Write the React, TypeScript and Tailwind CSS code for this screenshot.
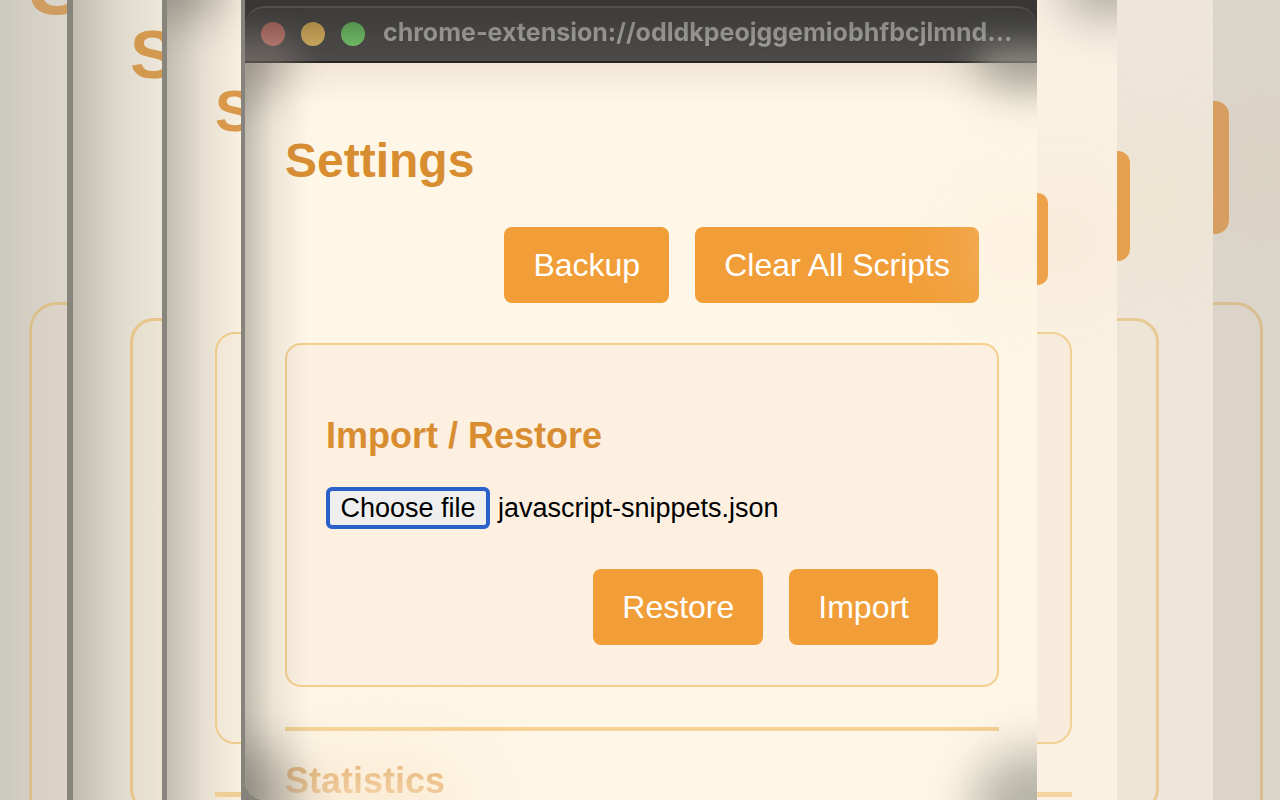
import type { ReactNode } from 'react';

function Glow({ className }: { className: string }) {
  return <div aria-hidden="true" className={`pointer-events-none absolute ${className}`} />;
}

function ActionButton({ children }: { children: ReactNode }) {
  return (
    <button
      type="button"
      className="h-[76px] rounded-lg bg-[#f19e38] px-[29px] text-[32px] leading-9 whitespace-nowrap text-white"
    >
      {children}
    </button>
  );
}

/* Slices of the larger windows that fan out behind the front one. */
function LeftEdges() {
  return (
    <>
      <div
        aria-hidden="true"
        className="relative w-[67px] shrink-0 overflow-hidden bg-linear-to-r from-[#cbc8bd] via-[#d6d1c6] to-[#dbd6cb]"
      >
        <span className="absolute -top-14 left-[29px] text-[83px] leading-none font-bold text-[#cf9d5f]">S</span>
        <div className="absolute top-[302px] left-[29px] h-[600px] w-[200px] rounded-[28px] border-[3px] border-[#dcc08c] bg-[#dfd0c1]/25" />
      </div>
      <div
        aria-hidden="true"
        className="relative w-[95px] shrink-0 overflow-hidden border-l-6 border-[#87857c] bg-linear-to-r from-[#bfbaae] via-[#dfd9cd] via-50% to-[#ede7da]"
      >
        <span className="absolute top-[20px] left-[57px] text-[69px] leading-none font-bold text-[#d3994f]">S</span>
        <div className="absolute top-[318px] left-[57px] h-[495px] w-[200px] rounded-3xl border-[3px] border-[#e7c58a] bg-[#e9dfc9]/35" />
      </div>
      <div
        aria-hidden="true"
        className="relative w-[79px] shrink-0 overflow-hidden border-l-5 border-[#87857c] bg-linear-to-r from-[#c2beb1] via-[#e7dfd1] via-50% to-[#f8f0e0]"
      >
        <Glow className="-top-12 -left-10 h-16 w-24 rounded-full bg-[#77736b]/70 blur-xl" />
        <span className="absolute top-[82px] left-12 text-[58px] leading-none font-bold text-[#d9984a]">S</span>
        <div className="absolute top-[332px] left-12 h-[412px] w-[200px] rounded-[20px] border-2 border-[#efcb8b] bg-[#f6ead9]/50" />
        <div className="absolute top-[792px] left-12 h-[5px] w-[200px] bg-[#efcf97]" />
      </div>
    </>
  );
}

function RightEdges() {
  return (
    <>
      <div aria-hidden="true" className="relative w-20 shrink-0 overflow-hidden bg-[#faf1e3]">
        <Glow className="-top-12 -right-10 h-16 w-24 rounded-full bg-[#8c897f]/70 blur-xl" />
        <Glow className="top-44 -left-3 h-32 w-20 rounded-full bg-[#f8e5cf]/60 blur-2xl" />
        <div className="absolute top-[193px] right-[69px] h-[92px] w-[200px] rounded-[10px] bg-[#eea34b]" />
        <div className="absolute top-[332px] right-[45px] h-[412px] w-[200px] rounded-[20px] border-2 border-[#f2cf92] bg-[#f7ecdc]" />
        <div className="absolute top-[792px] right-[45px] h-[5px] w-[200px] bg-[#f3d6a0]" />
      </div>
      <div aria-hidden="true" className="relative w-24 shrink-0 overflow-hidden bg-[#eee6da]">
        <Glow className="top-32 left-0 h-36 w-20 rounded-full bg-[#ece2cc]/90 blur-2xl" />
        <div className="absolute top-[151px] right-[83px] h-[110px] w-[200px] rounded-xl bg-[#e6a150]" />
        <div className="absolute top-[318px] right-[54px] h-[495px] w-[200px] rounded-3xl border-[3px] border-[#e9ca94] bg-[#ede5d6]" />
      </div>
      <div aria-hidden="true" className="relative w-[67px] shrink-0 overflow-hidden bg-[#dcd5ca]">
        <Glow className="top-24 left-4 h-36 w-16 rounded-full bg-[#d9d2c0] blur-2xl" />
        <div className="absolute top-[101px] right-[51px] h-[133px] w-[200px] rounded-[14px] bg-[#d69e60]" />
        <div className="absolute top-[302px] right-[17px] h-[600px] w-[200px] rounded-[28px] border-[3px] border-[#d9bf90] bg-[#dcd4c8]" />
      </div>
    </>
  );
}

function TitleBar() {
  return (
    <header className="relative h-[63px] shrink-0 overflow-hidden bg-[#393635] pt-[6px]">
      <div className="flex h-[57px] items-center rounded-t-[20px] border-t-2 border-b-2 border-t-[#51504d] border-b-[#252423] bg-linear-to-b from-[#3d3c3a] to-[#4c4b48] px-4 pb-[2px]">
        <div className="flex shrink-0 gap-4">
          <span className="size-6 rounded-full bg-linear-to-b from-[#8f5850] to-[#b46e63]" />
          <span className="size-6 rounded-full bg-linear-to-b from-[#a88748] to-[#caa75a]" />
          <span className="size-6 rounded-full bg-linear-to-b from-[#56924f] to-[#6db763]" />
        </div>
        <span className="ml-[18px] bg-linear-to-b from-[#858482] to-[#a09f9d] bg-clip-text pb-1 font-['Inter',sans-serif] text-[25px] leading-8 font-bold whitespace-nowrap text-transparent">
          chrome-extension://odldkpeojggemiobhfbcjlmnd...
        </span>
      </div>
      <Glow className="-bottom-8 -left-10 h-14 w-24 rounded-full bg-[#958482]/45 blur-lg" />
      <Glow className="-right-12 -bottom-8 h-12 w-28 rounded-full bg-[#a8a49b]/70 blur-lg" />
    </header>
  );
}

export default function App() {
  return (
    <div className="flex h-screen min-h-[600px] overflow-hidden bg-[#fef6e6] font-['Liberation_Sans',Arial,sans-serif]">
      <LeftEdges />
      <main className="flex min-w-0 flex-1 flex-col overflow-hidden border-l-4 border-[#85837b] bg-linear-to-r from-[#85837b] to-[#b9b6aa]">
        <TitleBar />
        <div className="relative flex-1 overflow-hidden rounded-b-[20px] bg-[#fef6e6] pt-[70px] pr-[38px] pl-10">
          <h1 className="text-5xl leading-[56px] font-bold text-[#d98d31]">Settings</h1>
          <div className="mt-[38px] flex justify-end gap-[26px] pr-5">
            <ActionButton>Backup</ActionButton>
            <ActionButton>Clear All Scripts</ActionButton>
          </div>

          <section className="mt-10 rounded-2xl border-2 border-[#f6ce8c] bg-[#fdf0e1] px-[39px] pt-[71px] pb-10">
            <h2 className="text-4xl leading-10 font-bold text-[#d98d31]">Import / Restore</h2>
            <div className="mt-[31px] flex items-center gap-2 text-[27px] leading-[34px] text-black">
              <input id="backup-file" type="file" className="sr-only" />
              <label
                htmlFor="backup-file"
                className="flex h-[42px] w-[164px] shrink-0 items-center justify-center rounded-md border-4 border-[#2960c9] bg-[#efefef] whitespace-nowrap"
              >
                Choose file
              </label>
              <span>javascript-snippets.json</span>
            </div>
            <div className="mt-10 flex justify-end gap-[26px] pr-5">
              <ActionButton>Restore</ActionButton>
              <ActionButton>Import</ActionButton>
            </div>
          </section>

          <hr className="mt-10 h-1 border-0 bg-[#f6d193]" />
          <h2 className="mt-[30px] bg-linear-to-b from-[#e3ab66] to-[#efc795] bg-clip-text text-4xl leading-10 font-bold text-transparent">
            Statistics
          </h2>

          <Glow className="inset-y-0 left-0 w-16 bg-linear-to-r from-[#77756c]/45 via-[#8e897c]/15 via-45% to-transparent" />
          <Glow className="inset-x-0 top-0 h-10 bg-linear-to-b from-[#e9dccb]/60 to-transparent" />
          <Glow className="-top-12 -left-14 h-20 w-24 rounded-full bg-[#625e57]/60 blur-xl" />
          <Glow className="-top-14 -right-12 h-20 w-28 rounded-full bg-[#7d7d73]/75 blur-xl" />
          <Glow className="-bottom-14 -left-14 h-28 w-28 rounded-full bg-[#65635d]/55 blur-xl" />
          <Glow className="-right-16 -bottom-16 h-28 w-32 rounded-full bg-[#8e8e84]/65 blur-xl" />
          <Glow className="top-32 -right-4 h-28 w-20 rounded-full bg-[#fbe4cc]/35 blur-2xl" />
          <Glow className="-bottom-12 left-10 h-20 w-44 rounded-full bg-[#f8dfc0]/60 blur-2xl" />
        </div>
      </main>
      <RightEdges />
    </div>
  );
}
